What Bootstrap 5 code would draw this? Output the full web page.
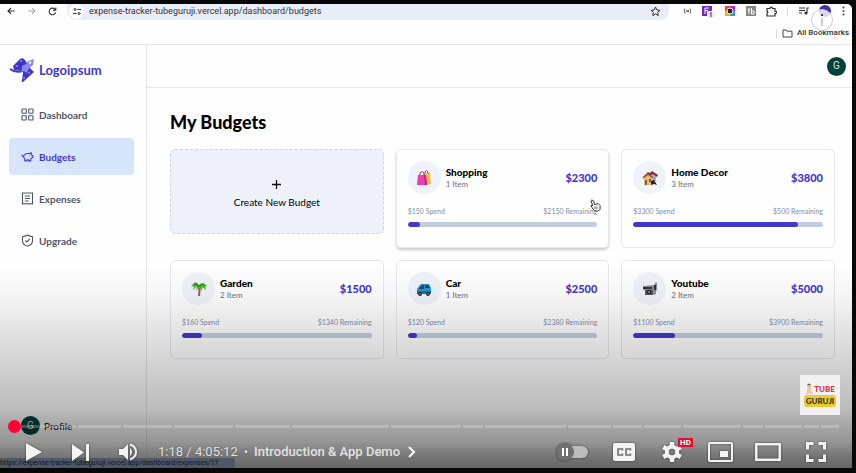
<!DOCTYPE html>
<html lang="en">
<head>
<meta charset="utf-8">
<meta name="viewport" content="width=device-width, initial-scale=1">
<title>My Budgets</title>
<link href="https://cdn.jsdelivr.net/npm/bootstrap@5.3.0/dist/css/bootstrap.min.css" rel="stylesheet">
<style>
:root{--brand:#4338ca;--edge:#e5e7eb;--slate:#4f566b}
body{background:#080808;font-family:Lato,"Open Sans",sans-serif;font-size:10px;line-height:12px;color:#000}
svg{display:block;flex-shrink:0}
a{text-decoration:none;color:inherit}
button{border:0;background:none;padding:0;color:inherit}
.player{margin:4px 4px 5px 0;min-height:calc(100vh - 9px);background:#fefefe;border-top-right-radius:5px}
.ui-font{font-family:Roboto,sans-serif}
.chrome-bar{height:17px;color:#333;padding-bottom:3px}
.tool{width:21px;height:14px}
.tool.slim{width:17px}
.omnibox{background:#e9edf7;border-radius:0 0 9px 9px;height:17px;padding:0 8px 0 2px;margin-left:4px}
.omnibox input{border:0;background:none;outline:0;padding:0;font-size:9px;color:#333;min-width:0}
.tune{width:15px;height:15px;border-radius:8px;background:#fff;margin-right:5px}
.divide{width:1px;height:9px;background:#cbdcf8;margin:0 5px}
.bookmarks{height:24px;border-bottom:1px solid var(--edge);padding:1px 3px 0 0;font-size:8px;font-weight:500;color:#333}
.me{width:12px;height:12px;border-radius:6px;background:#4a2aa5}
.side{width:147px;border-right:1px solid var(--edge);padding:12px 12px 33px 9px}
.brand-name{font-size:13px;line-height:18px;font-weight:700;color:var(--brand)}
.side-nav{gap:5px;margin-top:13px}
.side-nav .nav-link{height:37px;padding:0 12px;gap:5px;border-radius:4px;color:var(--slate);font-weight:700}
.side-nav .nav-link.active{background:#d7e5fb;color:var(--brand)}
.avatar{width:19px;height:19px;border-radius:10px;background:#03423a;color:#dfe9e6;font-size:10px}
.top{height:43px;border-bottom:1px solid var(--edge);padding-right:6px}
.content{padding:23px 17px 24px 23px}
.content h1{font-size:18px;line-height:22px;font-weight:900;margin-bottom:16px}
.budgets{--bs-gutter-x:12px;--bs-gutter-y:12px}
.create{height:85px;background:#eef1f9;border:1px dashed #d3d6dd;border-radius:5px;gap:7px;padding-top:4px}
.budget{height:99px;border:1px solid var(--edge);border-radius:5px;padding:11px;background:transparent}
.budget.raised{box-shadow:0 2px 3px #0003}
.bubble{width:33px;height:33px;border-radius:17px;background:#eff2f9;margin-right:5px}
.budget h2{font-size:10px;line-height:12px;font-weight:900;margin:0}
.budget .count{color:#6b7280;font-size:8px}
.amount{font-size:11px;font-weight:900;color:var(--brand)}
.split{font-size:7px;line-height:10px;color:#8190a6;margin:12px 0 6px}
.budget .progress{height:5px;border-radius:3px;background:#c3cedd}
.budget .progress-bar{background:var(--brand);border-radius:3px}
.shade{inset:0;background:linear-gradient(to top,#0009 0,#0008 12px,#0006 28px,#0005 45px,#00000042 60px,#0000002c 105px,#0000001a 140px,#00000008 175px,#0000 205px);pointer-events:none}
.pointer{right:3px;top:49px}
.info{right:19px;top:5px;width:22px;height:22px;border:1px solid #ccc;border-radius:11px;background:#ffffffd0}
.status{left:0;bottom:0;height:10px;min-width:235px;background:#4e5868;color:#10151c;font-size:7px;line-height:10px;white-space:nowrap;border-top-right-radius:2px}
.controls{left:0;right:0;bottom:0;color:#f3f3f3}
.channel{right:12px;bottom:53px;width:40px;height:40px;background:#f1f1f1}
.channel b{line-height:12px;font-size:8px;font-weight:900}
.channel .name{background:#e9cb32;border-radius:3px;color:#333;padding:0 2px}
.chapters{gap:2px;padding:0 13px 0 12px;height:13px;margin-bottom:3px}
.chapters span{height:3px;background:#ffffff38;flex-basis:0}
.scrub{left:8px;top:0;width:13px;height:13px;border-radius:7px;background:#f03}
.control-row{height:32px;padding:0 12px 0 10px}
.ctl{width:47px;height:32px}
.ctl.wide{width:48px}
.ctl svg{filter:drop-shadow(0 0 1px #0008)}
.time{font-size:13px;line-height:18px;color:#e2e2e2;margin-left:7px;text-shadow:0 0 2px #0006}
.time .chapter{font-weight:500}
.dot{margin:0 6px}
.hd{left:30px;top:2px;background:#d8112d;color:#fff;font-size:8px;line-height:9px;padding:0 2px;font-weight:700}
</style>
<script src="https://cdn.jsdelivr.net/npm/bootstrap@5.3.0/dist/js/bootstrap.bundle.min.js"></script>
</head>
<body>
<div class="player position-relative d-flex flex-column overflow-hidden">
  <div class="chrome-bar ui-font d-flex align-items-center">
    <button class="tool d-flex align-items-center justify-content-center" aria-label="Back"><svg width="8" height="8" viewBox="0 0 8 8" fill="none" stroke="#333" stroke-width="1.1"><path d="M7.5 4H1M4 1 1 4l3 3"/></svg></button>
    <button class="tool d-flex align-items-center justify-content-center" aria-label="Forward"><svg width="8" height="8" viewBox="0 0 8 8" fill="none" stroke="#999" stroke-width="1"><path d="M.5 4H7M4 1l3 3-3 3"/></svg></button>
    <button class="tool d-flex align-items-center justify-content-center" aria-label="Reload"><svg width="9" height="9" viewBox="0 0 9 9" fill="none" stroke="#333" stroke-width="1.1"><path d="M7.6 5.5A3.3 3.3 0 1 1 7.2 2.6M7.8.5v2.6H5.2"/></svg></button>
    <div class="omnibox d-flex align-items-center flex-grow-1">
      <span class="tune d-flex align-items-center justify-content-center"><svg width="8" height="7" viewBox="0 0 8 7" fill="none" stroke="#333"><path d="M4.5 1.5H8M0 5.5h3.500"/><circle cx="2" cy="1.500" r="1"/><circle cx="6" cy="5.500" r="1"/></svg></span>
      <input class="flex-grow-1 ui-font" type="text" aria-label="Address" value="expense-tracker-tubeguruji.vercel.app/dashboard/budgets">
      <button aria-label="Bookmark"><svg width="11" height="11" viewBox="0 0 11 11" fill="none" stroke="#333"><path d="m5.500 1 1.300 3 3.200.300-2.400 2.100.700 3.200-2.800-1.700-2.800 1.700.700-3.200L1 4.300 4.200 4z"/></svg></button>
    </div>
    <button class="tool d-flex align-items-center justify-content-center ms-2" aria-label="Extension one"><svg width="9" height="6" viewBox="0 0 9 6" fill="none" stroke="#555" stroke-width=".9"><path d="M2 .5Q.5 3 2 5.500M7 .500Q8.500 3 7 5.500M3.200 2l1 2 .6-1.500L5.500 4V2"/></svg></button>
    <button class="tool d-flex align-items-center justify-content-center" aria-label="Extension two"><svg width="13" height="13" viewBox="0 0 13 13"><path fill="#7128c4" d="M0 1h10v10H0z"/><path d="M3 3h4M3 5.500h3M3 3v6" stroke="#fff" fill="none"/><rect x="5" y="6" width="8" height="7" rx="1" fill="#eee"/><path d="m8 8.500 1-1V12" stroke="#333" fill="none"/></svg></button>
    <button class="tool d-flex align-items-center justify-content-center" aria-label="Extension three"><svg width="10" height="10" viewBox="0 0 10 10"><path fill="#e8452e" d="M0 0h5v5H0z"/><path fill="#b12bd3" d="M5 0h5v5H5z"/><path fill="#f3ae20" d="M0 5h5v5H0z"/><path fill="#1f9de5" d="M5 5h5v5H5z"/><circle cx="5" cy="5" r="3" fill="#222" stroke="#fff"/></svg></button>
    <button class="tool d-flex align-items-center justify-content-center" aria-label="Extension four"><svg width="10" height="10" viewBox="0 0 10 10"><path fill="#858585" d="M0 0h10v10H0z"/><path d="M1.500 4h2.500M3 2v6M5.500 2v6h2.500V5H5.500" stroke="#fff" fill="none"/></svg></button>
    <button class="tool d-flex align-items-center justify-content-center" aria-label="Extensions"><svg width="11" height="11" viewBox="0 0 11 11" fill="none" stroke="#333" stroke-width="1.200"><path d="M1 2.500h3a1.300 1.300 0 1 1 2.600 0H9v2.700a1.200 1.200 0 1 1 0 2.300V10H1V7.500a1.200 1.200 0 0 0 0-2.300z"/></svg></button>
    <span class="divide"></span>
    <button class="tool d-flex align-items-center justify-content-center" aria-label="Media"><svg width="10" height="8" viewBox="0 0 10 8" fill="none" stroke="#333" stroke-width="1.100"><path d="M0 1h6M0 3.500h6M0 6h3M8 6V1h2"/><circle cx="7" cy="6" r="1" fill="#333"/></svg></button>
    <button class="tool d-flex align-items-center justify-content-center" aria-label="Account"><span class="me"></span></button>
    <button class="tool slim d-flex align-items-center justify-content-center" aria-label="Menu"><svg width="3" height="10" viewBox="0 0 3 10" fill="#444"><circle cx="1.500" cy="1.500" r="1"/><circle cx="1.500" cy="5" r="1"/><circle cx="1.500" cy="8.500" r="1"/></svg></button>
  </div>
  <div class="bookmarks ui-font d-flex align-items-center justify-content-end">
    <span class="divide"></span>
    <a href="#" class="d-flex align-items-center gap-1"><svg width="11" height="9" viewBox="0 0 11 9" fill="none" stroke="#444"><path d="M1 1h3l1 1.200h5V8H1z"/></svg>All Bookmarks</a>
  </div>

  <div class="d-flex flex-grow-1">
    <aside class="side d-flex flex-column flex-shrink-0">
      <a href="#" class="d-flex align-items-center gap-1"><svg width="26" height="26" viewBox="0 0 26 26"><path fill="#4038c8" d="M4 9 11 2q3-2 5 1l5 8-8 3-8-1z"/><path fill="#4038c8" d="m14 12 6-2 5 5-11 10q-2 0-1-2l1-7z"/><path d="M1 12q5 4 13 2" stroke="#4038c8" stroke-width="2" fill="none"/><path fill="#8d86f5" d="m13 9 4-2 2-3 6-2-1 6-4 3-2 5-3-2-3 1 1-3z"/><circle cx="21" cy="5.500" r="1.200" fill="#fff"/><g fill="#c9c5ff"><circle cx="8" cy="9" r=".8"/><circle cx="12" cy="4" r=".8"/><circle cx="20" cy="16" r=".8"/><circle cx="15" cy="21" r=".8"/></g></svg><span class="brand-name">Logoipsum</span></a>
      <nav class="side-nav nav flex-column">
        <a class="nav-link d-flex align-items-center" href="#"><svg width="13" height="13" viewBox="0 0 13 13" fill="none" stroke="currentColor" stroke-width="1.100"><rect x="1" y="1" width="4.300" height="4.300" rx=".6"/><rect x="7.700" y="1" width="4.300" height="4.300" rx=".6"/><rect x="1" y="7.700" width="4.300" height="4.300" rx=".6"/><rect x="7.700" y="7.700" width="4.300" height="4.300" rx=".6"/></svg>Dashboard</a>
        <a class="nav-link active d-flex align-items-center" href="#" aria-current="page"><svg width="13" height="13" viewBox="0 0 24 24" fill="none" stroke="currentColor" stroke-width="2" stroke-linecap="round" stroke-linejoin="round"><path d="M19 5c-1.500 0-2.800 1.400-3 2-3.500-1.500-11-.3-11 5 0 1.800 0 3 2 4.500V20h4v-2h3v2h4v-4c1-.5 1.700-1 2-2h2v-4h-2c0-1-.5-1.500-1-2zM2 9v1c0 1.100.9 2 2 2h1M16 11h.01"/></svg>Budgets</a>
        <a class="nav-link d-flex align-items-center" href="#"><svg width="13" height="13" viewBox="0 0 13 13" fill="none" stroke="currentColor" stroke-width="1.100"><path d="M1.500 1h10v11l-1.200-.5L9 12l-1.300-.5L6.500 12l-1.200-.5L4 12l-1.300-.5-1.200.5zM4 4h5M4 6.500h5M4 9h3.500"/></svg>Expenses</a>
        <a class="nav-link d-flex align-items-center" href="#"><svg width="13" height="13" viewBox="0 0 13 13" fill="none" stroke="currentColor" stroke-width="1.100"><path d="M6.500 1Q9 2.500 11.500 2.700v4q0 4-5 5.500-5-1.500-5-5.500v-4Q4 2.500 6.500 1zM4.300 6.500l1.500 1.500 3-3"/></svg>Upgrade</a>
      </nav>
      <div class="d-flex align-items-center mt-auto ps-2 ms-1 gap-1"><span class="avatar ui-font d-flex align-items-center justify-content-center">G</span>Profile</div>
    </aside>
    <div class="flex-grow-1">
      <header class="top d-flex align-items-center justify-content-end"><button class="avatar ui-font d-flex align-items-center justify-content-center" aria-label="Profile menu">G</button></header>
      <main class="content">
        <h1>My Budgets</h1>
        <div class="row budgets">
          <div class="col-4"><button class="create w-100 d-flex flex-column align-items-center justify-content-center"><svg width="9" height="9" viewBox="0 0 9 9" stroke="#111" stroke-width="1.300"><path d="M0 4.500h9M4.500 0v9"/></svg><span>Create New Budget</span></button></div>
          <div class="col-4"><section class="budget raised card position-relative">
            <div class="d-flex align-items-center"><span class="bubble d-flex align-items-center justify-content-center"><svg width="16" height="16" viewBox="0 0 16 16"><path fill="#efc32d" d="m7 4 7-1 1 11-8 1z"/><path d="M9 4V2q2-3 3 1v1M4 5V3q2-3 4 0v2" stroke="#a23973" fill="none"/><path fill="#ef3fae" d="M2 5h8l1 10H1z"/><path fill="#c52488" d="m8 5 2 0 1 10H9z"/></svg></span><div><h2>Shopping</h2><div class="count">1 Item</div></div><span class="amount ms-auto">$2300</span></div>
            <div class="split d-flex justify-content-between"><span>$150 Spend</span><span>$2150 Remaining</span></div>
            <div class="progress"><div class="progress-bar" style="width:6.5%"></div></div>
            <svg class="pointer position-absolute me-1" width="11" height="13" viewBox="0 0 12 14"><path d="m1 2 1-1 2 1 1 4 4-1 2 2v4l-2 2H5L2 9 1 7h2z" fill="#fff" stroke="#222"/><path d="M5.500 8v3M7.500 8v3" stroke="#555"/></svg>
          </section></div>
          <div class="col-4"><section class="budget card">
            <div class="d-flex align-items-center"><span class="bubble d-flex align-items-center justify-content-center"><svg width="16" height="16" viewBox="0 0 16 16"><path fill="#9bb0bd" d="M8 4h6v7H8z"/><path fill="#7d3038" d="m6 5 4-4 6 4-1 2-4-3-3 2zM1 7l5-5 2 1-2 4z"/><path fill="#e7bd7d" d="m2 8 4-4 5 4v7H2z"/><path d="m1 8 5-4 5 4" stroke="#a14d3e" stroke-width="1.500" fill="none"/><path fill="#925b36" d="M3 10h2v5H3zM7 9h2v3H7z"/><path fill="#26272b" d="m9 11 3-1 3 5-3-1-3 1z"/></svg></span><div><h2>Home Decor</h2><div class="count">3 Item</div></div><span class="amount ms-auto">$3800</span></div>
            <div class="split d-flex justify-content-between"><span>$3300 Spend</span><span>$500 Remaining</span></div>
            <div class="progress"><div class="progress-bar" style="width:86.8%"></div></div>
          </section></div>
          <div class="col-4"><section class="budget card">
            <div class="d-flex align-items-center"><span class="bubble d-flex align-items-center justify-content-center"><svg width="16" height="16" viewBox="0 0 16 16"><path d="M8 5q1 5 0 10" stroke="#986537" stroke-width="2" fill="none"/><path fill="#4caf2c" d="M8 4Q5-1 2 3L0 6l3-1-1 4 4-4-1 5 3-4 3 4V6l4 3-1-4 2 1Q13-1 8 4z"/><path d="M8 5 4 3M8 5l4-2" stroke="#257c22"/></svg></span><div><h2>Garden</h2><div class="count">2 Item</div></div><span class="amount ms-auto">$1500</span></div>
            <div class="split d-flex justify-content-between"><span>$160 Spend</span><span>$1340 Remaining</span></div>
            <div class="progress"><div class="progress-bar" style="width:10.7%"></div></div>
          </section></div>
          <div class="col-4"><section class="budget card">
            <div class="d-flex align-items-center"><span class="bubble d-flex align-items-center justify-content-center"><svg width="16" height="16" viewBox="0 0 16 16"><path fill="#2695d4" d="m1 8 4-5h8l2 4v6H1z"/><path fill="#294a60" d="m3 7 3-3h2v4H3zM9 4h3l2 3H9z"/><path fill="#1472aa" d="M1 10h14v3H1z"/><circle cx="4" cy="13" r="2" fill="#222"/><circle cx="12" cy="13" r="2" fill="#222"/><circle cx="4" cy="13" r=".8" fill="#aaa"/><circle cx="12" cy="13" r=".8" fill="#aaa"/></svg></span><div><h2>Car</h2><div class="count">1 Item</div></div><span class="amount ms-auto">$2500</span></div>
            <div class="split d-flex justify-content-between"><span>$120 Spend</span><span>$2380 Remaining</span></div>
            <div class="progress"><div class="progress-bar" style="width:4.8%"></div></div>
          </section></div>
          <div class="col-4"><section class="budget card">
            <div class="d-flex align-items-center"><span class="bubble d-flex align-items-center justify-content-center"><svg width="16" height="16" viewBox="0 0 16 16"><path fill="#8a8f93" d="m1 5 11-1 2-3 1 1v7l-1 1v3l-3 1H3V9H1z"/><path fill="#303438" d="M1 6h9v2H1zM12 4h2v5h-2z"/><path fill="#55595d" d="M3 9h8v5H3z"/><circle cx="7" cy="11" r="2.200" fill="#222"/><circle cx="7" cy="11" r="1" fill="#9ba0a5"/></svg></span><div><h2>Youtube</h2><div class="count">2 Item</div></div><span class="amount ms-auto">$5000</span></div>
            <div class="split d-flex justify-content-between"><span>$1100 Spend</span><span>$3900 Remaining</span></div>
            <div class="progress"><div class="progress-bar" style="width:22%"></div></div>
          </section></div>
        </div>
      </main>
    </div>
  </div>

  <div class="shade position-absolute"></div>
  <div class="status ui-font position-absolute">https://expense-tracker-tubeguruji.vercel.app/dashboard/expenses/17</div>
  <button class="info position-absolute d-flex align-items-center justify-content-center" aria-label="Info"><svg width="4" height="14" viewBox="0 0 4 14"><path d="M2 5v8" stroke="#ccc" stroke-width="2"/><path d="M1 1h2v2H1z" fill="#4a2aa5"/></svg></button>
  <a href="#" class="channel position-absolute d-flex flex-column align-items-center justify-content-center" aria-label="Tube Guruji">
    <span class="d-flex align-items-center"><svg width="9" height="12" viewBox="0 0 9 12"><circle cx="4" cy="3" r="2" fill="#e5b690"/><path d="M2 2q2-3 4 0z" fill="#654"/><path d="m2 5h4l1 4 2 2H0l2-2z" fill="#f0c9a7"/></svg><b class="text-danger">TUBE</b></span><b class="name">GURUJI</b>
  </a>
  <div class="controls ui-font position-absolute">
    <div class="chapters position-relative d-flex align-items-center">
      <span style="flex-grow:64"></span><span style="flex-grow:43"></span><span style="flex-grow:49"></span><span style="flex-grow:59"></span><span style="flex-grow:55"></span><span style="flex-grow:97"></span><span style="flex-grow:69"></span><span style="flex-grow:20"></span><span style="flex-grow:81"></span><span style="flex-grow:43"></span><span style="flex-grow:29"></span><span style="flex-grow:37"></span><span style="flex-grow:58"></span><span style="flex-grow:20"></span><span style="flex-grow:37"></span><span style="flex-grow:15"></span><span style="flex-grow:18"></span>
      <i class="scrub position-absolute"></i>
    </div>
    <div class="control-row d-flex align-items-center">
      <button class="ctl d-flex align-items-center justify-content-center" aria-label="Play"><svg width="16" height="18" viewBox="0 0 16 18" fill="currentColor"><path d="m0 0 16 9-16 9z"/></svg></button>
      <button class="ctl d-flex align-items-center justify-content-center" aria-label="Next"><svg width="17" height="17" viewBox="0 0 17 17" fill="currentColor"><path d="m0 0 12 8.500L0 17zM14 0h3v17h-3z"/></svg></button>
      <button class="ctl d-flex align-items-center justify-content-center" aria-label="Mute"><svg width="18" height="18" viewBox="0 0 18 18" fill="currentColor"><path d="M0 6h4l5-5v16l-5-5H0zM11 5q4 4 0 8z"/><path d="M11 1.500q6 2 6 7.500t-6 7.500" fill="none" stroke="currentColor" stroke-width="2"/></svg></button>
      <div class="time d-flex align-items-center text-nowrap"><span>1:18 / 4:05:12</span><span class="dot">•</span><button class="chapter d-flex align-items-center gap-2">Introduction &amp; App Demo<svg width="8" height="12" viewBox="0 0 8 12" fill="none" stroke="#fff" stroke-width="2"><path d="m1 1 5 5-5 5"/></svg></button></div>
      <button class="ctl wide d-flex align-items-center justify-content-center ms-auto" aria-label="Autoplay"><svg width="34" height="20" viewBox="0 0 34 20"><rect x="10" y="4" width="23" height="12" rx="6" fill="#bcbcbc"/><circle cx="10" cy="10" r="9" fill="#707070"/><path d="M8 6v8M12 6v8" stroke="#fff" stroke-width="2"/></svg></button>
      <button class="ctl wide d-flex align-items-center justify-content-center ms-1" aria-label="Captions"><svg width="22" height="18" viewBox="0 0 22 18"><rect width="22" height="18" rx="2" fill="currentColor"/><path d="M9.500 7.500V6H5v6h4.500v-1.500M17.500 7.500V6H13v6h4.500v-1.500" fill="none" stroke="#707070" stroke-width="1.600"/></svg></button>
      <button class="ctl wide position-relative d-flex align-items-center justify-content-center" aria-label="Settings"><svg width="20" height="20" viewBox="0 0 20 20" fill="none" stroke="currentColor"><circle cx="10" cy="10" r="5.200" stroke-width="4"/><path d="M10 0v4M10 16v4M1.300 5l3.500 2M15.200 13l3.500 2M1.300 15l3.500-2M15.200 7l3.500-2" stroke-width="4.500"/></svg><span class="hd position-absolute">HD</span></button>
      <button class="ctl wide d-flex align-items-center justify-content-center" aria-label="Miniplayer"><svg width="25" height="20" viewBox="0 0 25 20"><rect x="1" y="1" width="23" height="18" rx="1" fill="none" stroke="currentColor" stroke-width="2"/><path d="M12 9h8v6h-8z" fill="currentColor"/></svg></button>
      <button class="ctl wide d-flex align-items-center justify-content-center" aria-label="Theater mode"><svg width="26" height="18" viewBox="0 0 26 18" fill="none" stroke="currentColor" stroke-width="2.500"><path d="M1.300 1.300h23.400v15.400H1.300z"/></svg></button>
      <button class="ctl wide d-flex align-items-center justify-content-center" aria-label="Full screen"><svg width="20" height="20" viewBox="0 0 20 20" fill="none" stroke="currentColor" stroke-width="3"><path d="M1.500 7.500v-6h6M12.500 1.500h6v6M18.500 12.500v6h-6M7.500 18.500h-6v-6"/></svg></button>
    </div>
  </div>
</div>
</body>
</html>
